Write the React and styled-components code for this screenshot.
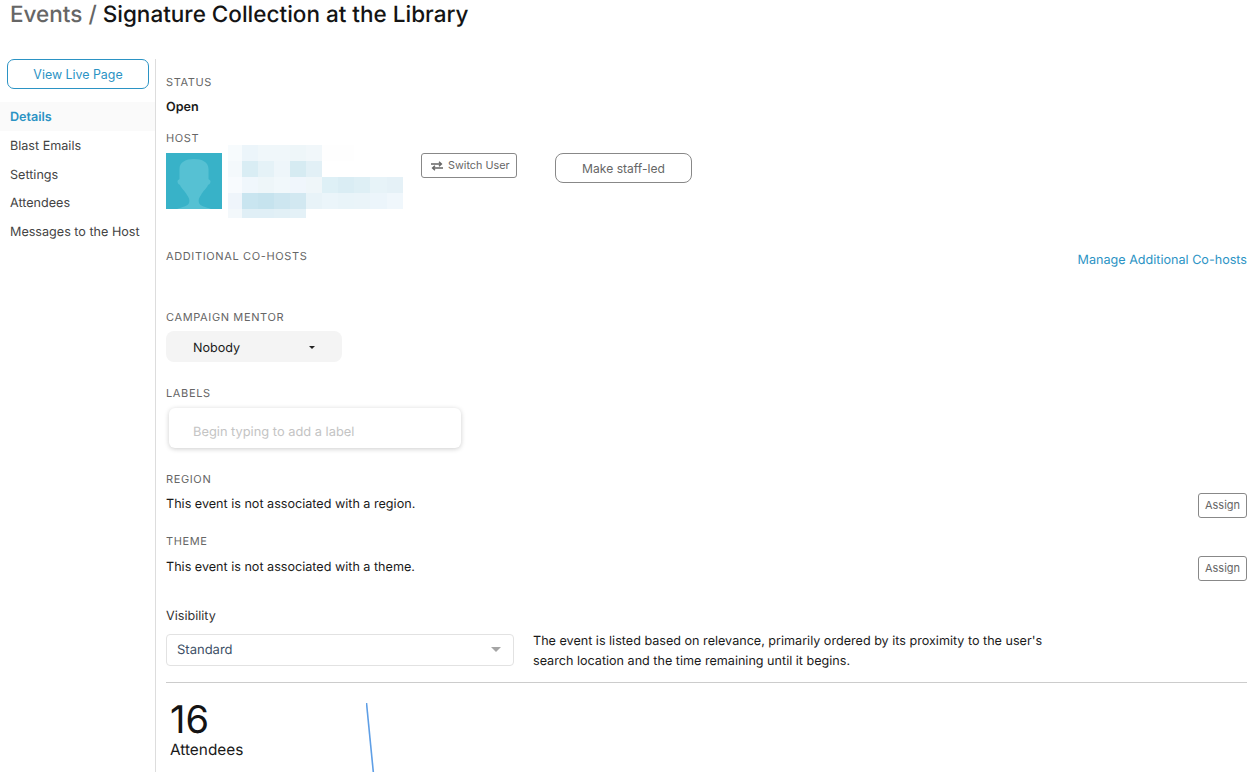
import React from 'react';
import styled, { createGlobalStyle } from 'styled-components';

const mosaicColumns = [14, 16, 16, 16, 16, 16, 16, 16, 16, 17, 16];
const mosaicRows = [16, 16, 16, 16, 9];
const mosaic = [
  ['#f7fbfd', '#ecf5fa', '#f0f7fa', '#f0f7fa', '#eef6f9', '#f1f7fa', '#fefefe', '#fefefe', '#fff', '#fff', '#fff'],
  ['#f4f9fc', '#d9edf4', '#e5f2f7', '#eef6fa', '#d6ebf2', '#e2f0f6', '#fff', '#fff', '#fff', '#fff', '#fff'],
  ['#f8fbfe', '#f0f7fc', '#eef6f9', '#f1f8fb', '#f0f6fc', '#eff6f9', '#def0f6', '#daedf4', '#deeff5', '#e7f3f8', '#e5f1f7'],
  ['#eff5fb', '#c9e5f0', '#c6e3ee', '#cde6f0', '#d2e8f1', '#e8f3f8', '#ebf5fa', '#e9f4f9', '#eaf4f9', '#ecf5fb', '#f0f7fc'],
  ['#f3f8fb', '#e0eff6', '#e0eff6', '#e2f0f6', '#e4f1f7', '#fff', '#fff', '#fff', '#fff', '#fff', '#fff'],
];

const navItems = ['Details', 'Blast Emails', 'Settings', 'Attendees', 'Messages to the Host'];

function App() {
  return (
    <Page>
      <GlobalStyle />
      <Title>
        <Crumb>Events /</Crumb> Signature Collection at the Library
      </Title>
      <Body>
        <Sidebar>
          <LiveButton>View Live Page</LiveButton>
          <Nav>
            {navItems.map((item, i) => (
              <NavItem key={item} $active={i === 0}>
                {item}
              </NavItem>
            ))}
          </Nav>
        </Sidebar>
        <Main>
          <Label>Status</Label>
          <StatusValue>Open</StatusValue>
          <Label $top={15}>Host</Label>
          <HostRow>
            <Avatar viewBox="0 0 56 56">
              <rect width="56" height="56" fill="#38b2c8" />
              <path
                d="M11 56C16 54 22 53 23 50C24 47 23 45 21 42C19 38 15 35 14 32C12 31 11.5 30 11.5 28C11.5 27 13 27 13.5 26V16C13.5 9 20 6 28 6C36 6 42.5 9 42.5 16V26C43 27 44.5 27 44.5 28C44.5 30 44 31 42 32C41 35 37 38 35 42C33 45 32 47 33 50C34 53 40 54 45 56Z"
                fill="#56c1d3"
              />
            </Avatar>
            <Mosaic>
              {mosaic.flat().map((colour, i) => (
                <MosaicCell key={i} $colour={colour} />
              ))}
            </Mosaic>
            <SwitchButton>
              <svg width="12" height="10" viewBox="0 0 12 10" fill="none" stroke="#666" strokeWidth="1.3">
                <path d="M0 3h10M8 .7 10.5 3 8 5.3" />
                <path d="M12 7H2M4 4.7 1.5 7 4 9.3" />
              </svg>
              Switch User
            </SwitchButton>
            <StaffButton>Make staff-led</StaffButton>
          </HostRow>
          <CoHostRow>
            <Label>Additional Co-hosts</Label>
            <ManageLink>Manage Additional Co-hosts</ManageLink>
          </CoHostRow>
          <Label $top={41}>Campaign Mentor</Label>
          <MentorDropdown>
            Nobody
            <Caret />
          </MentorDropdown>
          <Label $top={24}>Labels</Label>
          <LabelInput>Begin typing to add a label</LabelInput>
          <Label $top={24}>Region</Label>
          <AssignRow $top={7}>
            <BodyText>This event is not associated with a region.</BodyText>
            <AssignButton>Assign</AssignButton>
          </AssignRow>
          <Label $top={16}>Theme</Label>
          <AssignRow $top={8}>
            <BodyText>This event is not associated with a theme.</BodyText>
            <AssignButton>Assign</AssignButton>
          </AssignRow>
          <VisibilityLabel>Visibility</VisibilityLabel>
          <VisibilityRow>
            <VisibilitySelect>
              Standard
              <SelectCaret />
            </VisibilitySelect>
            <VisibilityHelp>
              The event is listed based on relevance, primarily ordered by its proximity to the user's search location
              and the time remaining until it begins.
            </VisibilityHelp>
          </VisibilityRow>
          <Divider />
          <StatsRow>
            <Counter>
              <CounterValue>16</CounterValue>
              <CounterLabel>Attendees</CounterLabel>
            </Counter>
            <Chart width="20" height="80" viewBox="0 0 20 80">
              <path d="M0.5 0 L8 76" stroke="#5f9fe6" strokeWidth="1.6" fill="none" />
            </Chart>
          </StatsRow>
        </Main>
      </Body>
    </Page>
  );
}

export default App;

const GlobalStyle = createGlobalStyle`
  html, body {
    margin: 0;
    padding: 0;
    background: #fff;
  }

  * {
    box-sizing: border-box;
  }

  body {
    font-family: 'Inter', 'Liberation Sans', sans-serif;
    font-size: 12.6px;
    color: #1a1a1a;
    text-rendering: geometricPrecision;
  }
`;

const Page = styled.div`
  height: 772px;
  overflow: hidden;
  display: flex;
  flex-direction: column;
`;

const Title = styled.h1`
  margin: 0;
  padding-left: 10px;
  height: 59px;
  font-size: 22.5px;
  line-height: 30px;
  font-weight: 500;
  color: #141414;
`;

const Crumb = styled.span`
  color: #666;
`;

const Body = styled.div`
  flex: 1;
  display: flex;
  min-height: 0;
`;

const Sidebar = styled.aside`
  width: 155px;
  flex-shrink: 0;
`;

const LiveButton = styled.button`
  display: block;
  width: 142px;
  height: 30px;
  margin-left: 7px;
  padding: 0;
  border: 1px solid #2b93c4;
  border-radius: 7px;
  background: #fff;
  color: #2b93c4;
  font: inherit;
  font-size: 12.4px;
`;

const Nav = styled.nav`
  margin-top: 13px;
  display: flex;
  flex-direction: column;
`;

const NavItem = styled.a`
  height: 28.75px;
  padding-left: 10px;
  line-height: 31px;
  color: ${(p) => (p.$active ? '#2b93c4' : '#444')};
  font-weight: ${(p) => (p.$active ? 600 : 400)};
  background: ${(p) => (p.$active ? '#fafafa' : 'transparent')};
`;

const Main = styled.main`
  flex: 1;
  min-width: 0;
  border-left: 1px solid #ddd;
  padding: 16px 10px 0 10px;
`;

const Label = styled.div`
  margin-top: ${(p) => p.$top || 0}px;
  height: 14px;
  font-size: 11px;
  line-height: 14px;
  letter-spacing: 0.63px;
  text-transform: uppercase;
  color: #666;
`;

const StatusValue = styled.div`
  height: 20px;
  margin-top: 7px;
  line-height: 24px;
  font-weight: 600;
`;

const HostRow = styled.div`
  display: flex;
  align-items: flex-start;
  height: 73px;
`;

const Avatar = styled.svg`
  width: 56px;
  height: 56px;
  margin-top: 8px;
  flex-shrink: 0;
`;

const Mosaic = styled.div`
  display: grid;
  grid-template-columns: ${mosaicColumns.map((c) => `${c}px`).join(' ')};
  grid-template-rows: ${mosaicRows.map((r) => `${r}px`).join(' ')};
  margin-left: 6px;
`;

const MosaicCell = styled.div`
  background: ${(p) => p.$colour};
`;

const SwitchButton = styled.button`
  display: flex;
  align-items: center;
  gap: 5px;
  height: 25px;
  width: 96px;
  margin: 8px 0 0 18px;
  padding: 0 0 0 9px;
  border: 1px solid #888;
  border-radius: 3px;
  background: #fff;
  color: #666;
  font: inherit;
  font-size: 10.8px;
`;

const StaffButton = styled.button`
  width: 137px;
  height: 30px;
  margin: 8px 0 0 38px;
  padding: 0;
  border: 1px solid #888;
  border-radius: 8px;
  background: #fff;
  color: #666;
  font: inherit;
  font-size: 12.1px;
`;

const CoHostRow = styled.div`
  display: flex;
  justify-content: space-between;
  align-items: flex-start;
  margin-top: 31px;
  height: 20px;
`;

const ManageLink = styled.a`
  line-height: 24px;
  color: #2b93c4;
`;

const MentorDropdown = styled.div`
  display: flex;
  align-items: center;
  width: 176px;
  height: 31px;
  margin-top: 7px;
  padding: 4px 27px 0;
  justify-content: space-between;
  border-radius: 8px;
  background: #f4f4f4;
`;

const Caret = styled.span`
  width: 0;
  height: 0;
  margin-top: -3px;
  border-left: 3px solid transparent;
  border-right: 3px solid transparent;
  border-top: 3px solid #222;
`;

const LabelInput = styled.div`
  width: 292px;
  height: 40px;
  margin: 8px 0 0 3px;
  padding: 15px 0 0 24px;
  border-radius: 6px;
  background: #fff;
  box-shadow: 0 1px 5px rgba(0, 0, 0, 0.2);
  color: #c4c4c4;
  font-size: 12.85px;
  line-height: 20px;
`;

const AssignRow = styled.div`
  display: flex;
  justify-content: space-between;
  align-items: flex-start;
  margin-top: ${(p) => p.$top}px;
`;

const BodyText = styled.div`
  height: 20px;
  line-height: 24px;
`;

const AssignButton = styled.button`
  width: 49px;
  height: 25px;
  padding: 0 0 2px;
  border: 1px solid #888;
  border-radius: 3px;
  background: #fff;
  color: #666;
  font: inherit;
  font-size: 11px;
`;

const VisibilityLabel = styled.div`
  height: 20px;
  margin-top: 24px;
  line-height: 24px;
  color: #333;
`;

const VisibilityRow = styled.div`
  display: flex;
  align-items: flex-start;
  margin-top: 5px;
  height: 40px;
`;

const VisibilitySelect = styled.div`
  display: flex;
  align-items: center;
  justify-content: space-between;
  width: 348px;
  height: 32px;
  margin-top: 4px;
  padding: 0 12px 0 10px;
  border: 1px solid #e2e2e2;
  border-radius: 4px;
  color: #3d4f66;
  font-size: 13px;
`;

const SelectCaret = styled.span`
  width: 0;
  height: 0;
  margin-top: -2px;
  border-left: 5px solid transparent;
  border-right: 5px solid transparent;
  border-top: 5px solid #a5a5a5;
`;

const VisibilityHelp = styled.p`
  margin: 0 0 0 19px;
  padding-top: 2px;
  width: 530px;
  height: 40px;
  line-height: 20px;
`;

const Divider = styled.hr`
  margin: 12px 0 0;
  border: none;
  border-top: 1px solid #ccc;
`;

const StatsRow = styled.div`
  display: flex;
  align-items: flex-start;
  padding: 16px 0 0 4px;
`;

const Counter = styled.div`
  width: 196px;
  flex-shrink: 0;
`;

const CounterValue = styled.div`
  font-size: 38px;
  line-height: 42px;
  color: #141414;
`;

const CounterLabel = styled.div`
  margin-top: -1px;
  font-size: 15.4px;
  line-height: 20px;
`;

const Chart = styled.svg`
  margin-top: 4px;
`;
